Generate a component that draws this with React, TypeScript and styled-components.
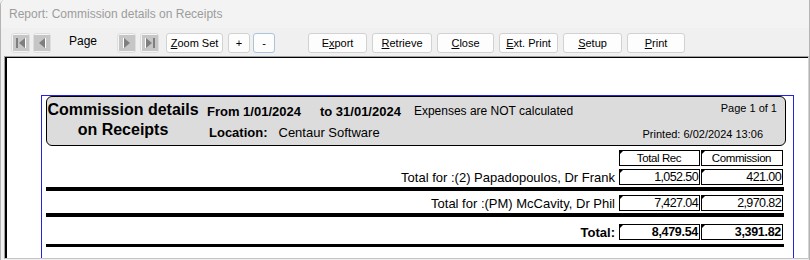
import React from 'react';
import styled, { createGlobalStyle } from 'styled-components';

const GlobalStyle = createGlobalStyle`
  html, body {
    margin: 0;
    padding: 0;
    background: #f0f0f0;
  }
  body {
    font-family: "Liberation Sans", Arial, sans-serif;
  }
`;

const Window = styled.div`
  width: 810px;
  height: 260px;
  box-sizing: border-box;
  border-left: 1px solid #b4b4b4;
  border-right: 1px solid #b4b4b4;
  border-top-left-radius: 5px;
  display: flex;
  flex-direction: column;
  overflow: hidden;
  background: #f0f0f0;
`;

const TitleBar = styled.div`
  height: 28px;
  flex-shrink: 0;
  display: flex;
  align-items: center;
  padding-left: 8px;
  font-size: 12px;
  color: #9c9c9c;
  background: #f3f3f3;
`;

const Toolbar = styled.div`
  height: 28px;
  flex-shrink: 0;
  box-sizing: border-box;
  display: flex;
  align-items: flex-start;
  padding: 5px 0 0 10px;
`;

const NavButton = styled.div<{ $ml?: number; $w?: number }>`
  width: ${p => p.$w ?? 19}px;
  height: 20px;
  margin-left: ${p => p.$ml ?? 0}px;
  box-sizing: border-box;
  border: 1px solid #dedede;
  border-radius: 3px;
  background: #f5f5f5;
  display: flex;
  align-items: center;
  justify-content: center;
  svg {
    display: block;
  }
`;

const PageLabel = styled.span`
  margin: 0 20px 0 18px;
  font-size: 12px;
  line-height: 16px;
  color: #000;
`;

const ToolButton = styled.button<{ $ml?: number; $w: number; $focus?: boolean }>`
  width: ${p => p.$w}px;
  height: 20px;
  margin-left: ${p => p.$ml ?? 0}px;
  padding: 0;
  box-sizing: border-box;
  border: 1px solid ${p => (p.$focus ? '#a9c4dc' : '#d2d2d2')};
  border-radius: 3px;
  background: #fdfdfd;
  font-family: "Liberation Sans", Arial, sans-serif;
  font-size: 11px;
  color: #000;
  display: flex;
  align-items: center;
  justify-content: center;
  u {
    text-decoration: underline;
    text-underline-offset: 1px;
  }
`;

const Frame = styled.div`
  flex: 1;
  margin: 0 0 1px 3px;
  border-top: 1px solid #a0a0a0;
  border-left: 1px solid #a0a0a0;
  border-right: 1px solid #d4d4d4;
  border-bottom: 1px solid #c4c4c4;
  box-shadow: inset 2px 1px 0 #000;
  background: #fff;
  padding: 38px 0 0 36px;
  overflow: hidden;
`;

const Page = styled.div`
  width: 753px;
  height: 300px;
  box-sizing: border-box;
  border: 1px solid #2323e8;
  padding: 0 7px 0 4px;
  color: #000;
  font-family: "Liberation Sans", Arial, sans-serif;
`;

const HeaderBox = styled.div`
  height: 50px;
  box-sizing: border-box;
  border: 1px solid #000;
  border-radius: 6px;
  background: #dcdcdc;
  display: flex;
`;

const ReportTitle = styled.div`
  width: 152px;
  flex-shrink: 0;
  padding-top: 3px;
  text-align: center;
  font-size: 16px;
  font-weight: bold;
  line-height: 20px;
`;

const HeaderMiddle = styled.div`
  flex: 1;
  padding: 4px 0 0 8px;
  display: flex;
  flex-direction: column;
`;

const HeaderLine = styled.div<{ $indent?: number }>`
  height: 20px;
  margin-bottom: 1px;
  padding-left: ${p => p.$indent ?? 0}px;
  display: flex;
  align-items: center;
  white-space: nowrap;
`;

const HeaderText = styled.span<{ $bold?: boolean; $size?: number; $ml?: number }>`
  font-weight: ${p => (p.$bold ? 'bold' : 'normal')};
  font-size: ${p => p.$size ?? 13}px;
  margin-left: ${p => p.$ml ?? 0}px;
`;

const HeaderRight = styled.div`
  padding: 4px 8px 0 0;
  display: flex;
  flex-direction: column;
  align-items: flex-end;
  font-size: 11px;
  line-height: 14px;
  white-space: nowrap;
`;

const Printed = styled.div`
  margin: 12px 14px 0 0;
`;

const Table = styled.div`
  margin: 4px 2px 0 0;
`;

const Row = styled.div<{ $mt?: number }>`
  height: 16px;
  margin-top: ${p => p.$mt ?? 0}px;
  padding-right: 1px;
  display: flex;
  justify-content: flex-end;
  align-items: center;
  gap: 1px;
`;

const RowLabel = styled.span<{ $bold?: boolean }>`
  padding-right: 3px;
  font-size: 13px;
  font-weight: ${p => (p.$bold ? 'bold' : 'normal')};
  white-space: nowrap;
`;

const Cell = styled.div<{ $w: number; $head?: boolean; $bold?: boolean }>`
  position: relative;
  width: ${p => p.$w}px;
  height: 16px;
  box-sizing: border-box;
  border: 1px solid #000;
  padding-right: 1px;
  text-align: ${p => (p.$head ? 'center' : 'right')};
  font-size: ${p => (p.$head ? 11.5 : p.$bold ? 12.5 : 12.5)}px;
  font-weight: ${p => (p.$bold ? 'bold' : 'normal')};
  line-height: 14px;
  letter-spacing: ${p => (p.$head ? '-0.4px' : p.$bold ? '-0.3px' : '-0.6px')};
  &::before {
    content: '';
    position: absolute;
    left: 0;
    top: 0;
    border-top: 3px solid #000;
    border-right: 3px solid transparent;
  }
`;

const Rule = styled.div<{ $h: number; $mt: number }>`
  height: ${p => p.$h}px;
  margin-top: ${p => p.$mt}px;
  background: #000;
`;

type NavKind = 'first' | 'prev' | 'next' | 'last';

const NavIcon: React.FC<{ kind: NavKind }> = ({ kind }) => {
  const dark = '#7f7f7f';
  return (
    <svg width="16" height="16" viewBox="0 0 16 16">
      <rect x="0" y="0" width="16" height="16" fill="#c6c6c6" />
      {kind === 'first' && (
        <>
          <rect x="3" y="3" width="2" height="10" fill={dark} />
          <polygon points="12,3 12,13 6,8" fill={dark} />
          <line x1="12.5" y1="3" x2="12.5" y2="13" stroke="#fff" />
        </>
      )}
      {kind === 'prev' && (
        <>
          <polygon points="11,3 11,13 5,8" fill={dark} />
          <line x1="11.5" y1="3" x2="11.5" y2="13" stroke="#fff" />
        </>
      )}
      {kind === 'next' && (
        <>
          <polygon points="5,3 5,13 11,8" fill={dark} />
          <line x1="4.5" y1="3" x2="4.5" y2="13" stroke="#fff" />
        </>
      )}
      {kind === 'last' && (
        <>
          <polygon points="4,3 4,13 10,8" fill={dark} />
          <line x1="3.5" y1="3" x2="3.5" y2="13" stroke="#fff" />
          <rect x="11" y="3" width="2" height="10" fill={dark} />
        </>
      )}
    </svg>
  );
};

const actions = [
  { key: 'R', post: 'etrieve', w: 60 },
  { key: 'C', post: 'lose', w: 57 },
  { key: 'E', post: 'xt. Print', w: 59 },
  { key: 'S', post: 'etup', w: 59 },
  { key: 'P', post: 'rint', w: 58 },
];

const rows = [
  { label: 'Total for :(2) Papadopoulos, Dr Frank', rec: '1,052.50', com: '421.00' },
  { label: 'Total for :(PM) McCavity, Dr Phil', rec: '7,427.04', com: '2,970.82' },
];

const App: React.FC = () => {
  return (
    <>
      <GlobalStyle />
      <Window>
        <TitleBar>Report: Commission details on Receipts</TitleBar>
        <Toolbar>
          <NavButton><NavIcon kind="first" /></NavButton>
          <NavButton $ml={3} $w={18}><NavIcon kind="prev" /></NavButton>
          <PageLabel>Page</PageLabel>
          <NavButton><NavIcon kind="next" /></NavButton>
          <NavButton $ml={4}><NavIcon kind="last" /></NavButton>
          <ToolButton $ml={7} $w={57}><u>Z</u>oom Set</ToolButton>
          <ToolButton $ml={5} $w={22}>+</ToolButton>
          <ToolButton $ml={3} $w={22} $focus>-</ToolButton>
          <ToolButton $ml={33} $w={59}>E<u>x</u>port</ToolButton>
          {actions.map((a, i) => (
            <ToolButton key={i} $ml={5} $w={a.w}>
              <u>{a.key}</u>{a.post}
            </ToolButton>
          ))}
        </Toolbar>
        <Frame>
          <Page>
            <HeaderBox>
              <ReportTitle>
                Commission details
                <br />
                on Receipts
              </ReportTitle>
              <HeaderMiddle>
                <HeaderLine>
                  <HeaderText $bold>From 1/01/2024</HeaderText>
                  <HeaderText $bold $ml={19}>to 31/01/2024</HeaderText>
                  <HeaderText $size={12} $ml={13}>Expenses are NOT calculated</HeaderText>
                </HeaderLine>
                <HeaderLine $indent={2}>
                  <HeaderText $bold>Location:</HeaderText>
                  <HeaderText $ml={11}>Centaur Software</HeaderText>
                </HeaderLine>
              </HeaderMiddle>
              <HeaderRight>
                <div>Page 1 of 1</div>
                <Printed>Printed: 6/02/2024 13:06</Printed>
              </HeaderRight>
            </HeaderBox>
            <Table>
              <Row>
                <Cell $w={81} $head>Total Rec</Cell>
                <Cell $w={82} $head>Commission</Cell>
              </Row>
              {rows.map((r, i) => (
                <React.Fragment key={i}>
                  <Row $mt={i === 0 ? 3 : 4}>
                    <RowLabel>{r.label}</RowLabel>
                    <Cell $w={81}>{r.rec}</Cell>
                    <Cell $w={82}>{r.com}</Cell>
                  </Row>
                  <Rule $h={4} $mt={2} />
                </React.Fragment>
              ))}
              <Row $mt={7}>
                <RowLabel $bold>Total:</RowLabel>
                <Cell $w={81} $bold>8,479.54</Cell>
                <Cell $w={82} $bold>3,391.82</Cell>
              </Row>
              <Rule $h={3} $mt={4} />
            </Table>
          </Page>
        </Frame>
      </Window>
    </>
  );
};

export default App;
